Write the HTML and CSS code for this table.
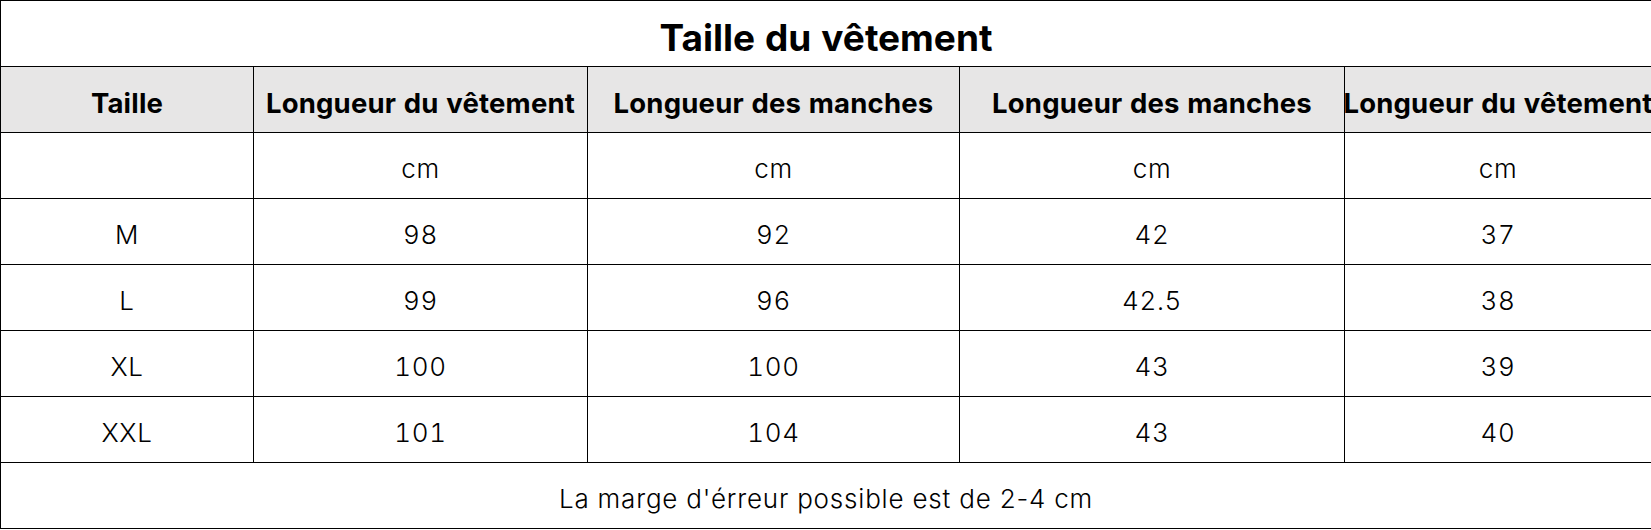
FILE: index.html
```html
<!DOCTYPE html>
<html lang="fr">
<head>
<meta charset="utf-8">
<title>Taille du vêtement</title>
<link rel="stylesheet" href="styles.css">
</head>
<body>
<table class="size-table">
  <colgroup>
    <col class="c1"><col class="c2"><col class="c3"><col class="c4"><col class="c5">
  </colgroup>
  <tr class="title-row"><td colspan="5">Taille du vêtement</td></tr>
  <tr class="head-row">
    <td>Taille</td>
    <td>Longueur du vêtement</td>
    <td>Longueur des manches</td>
    <td>Longueur des manches</td>
    <td><span class="clip">Longueur du vêtement</span></td>
  </tr>
  <tr><td></td><td>cm</td><td>cm</td><td>cm</td><td>cm</td></tr>
  <tr><td>M</td><td>98</td><td>92</td><td>42</td><td>37</td></tr>
  <tr><td>L</td><td>99</td><td>96</td><td>42.5</td><td>38</td></tr>
  <tr><td>XL</td><td>100</td><td>100</td><td>43</td><td>39</td></tr>
  <tr><td>XXL</td><td>101</td><td>104</td><td>43</td><td>40</td></tr>
  <tr class="note-row"><td colspan="5">La marge d'érreur possible est de 2-4 cm</td></tr>
</table>
</body>
</html>
```
FILE: styles.css
```css
html, body {
  margin: 0;
  padding: 0;
  background: #fff;
}
.size-table {
  border-collapse: collapse;
  table-layout: fixed;
  width: 1651px;
  font-family: Inter, "Noto Sans CJK SC", sans-serif;
  color: #000;
}
.c1 { width: 253px; }
.c2 { width: 334px; }
.c3 { width: 372px; }
.c4 { width: 385px; }
.c5 { width: 307px; }
.size-table tr { height: 66px; }
.size-table td {
  border: 1px solid #000;
  padding: 6px 0 0;
  text-align: center;
  vertical-align: middle;
  font-size: 26px;
  font-weight: 300;
  letter-spacing: 0.6px;
  font-variant-numeric: tabular-nums;
  white-space: nowrap;
  overflow: hidden;
}
.title-row td {
  font-size: 37px;
  font-weight: 700;
  letter-spacing: 0;
  padding-top: 8px;
}
.head-row td {
  background: #e7e6e6;
  font-size: 27.5px;
  font-weight: 700;
  letter-spacing: 0.2px;
}
.note-row td {
  font-variant-numeric: normal;
  letter-spacing: 0.8px;
}
.clip {
  display: block;
  margin: 0 -6px;
}
```
